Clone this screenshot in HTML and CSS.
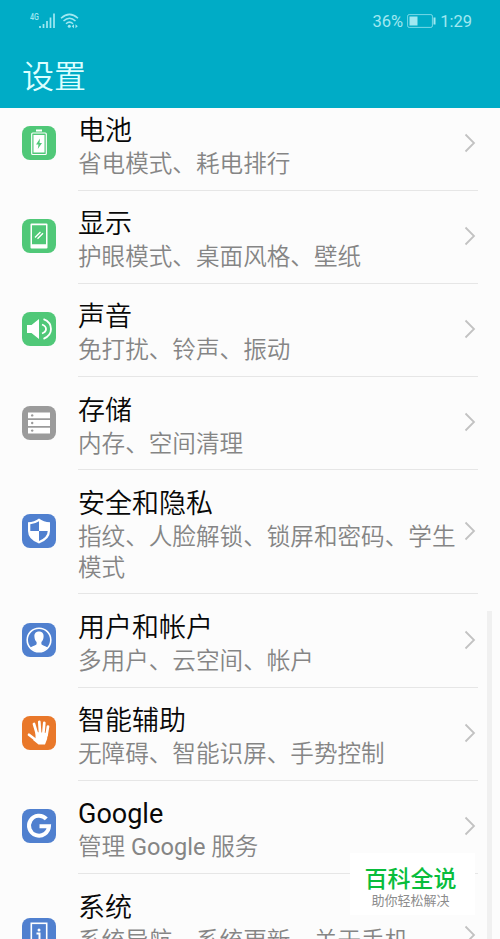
FILE: index.html
```html
<!DOCTYPE html>
<html lang="zh-CN">
<head>
<meta charset="utf-8">
<title>设置</title>
<link rel="stylesheet" href="styles.css">
</head>
<body>
<div class="phone">
  <header class="header">
    <div class="status">
      <div class="signals">
        <span class="network">4G</span>
        <svg class="bars" width="18" height="16" viewBox="0 0 18 16"><path d="M2 13v2M5.500 11v4M9 8v7M12.500 4.500v10.500M16 0.500v14.500" fill="none" stroke="currentColor" stroke-width="1.700"/></svg>
        <svg class="wifi" width="19" height="16" viewBox="0 0 19 16"><path d="M1 5.200Q9.500 -2.500 18 5.200M3.500 8Q9.500 2.500 15.500 8M6 10.800Q9.500 7.500 13 10.800" fill="none" stroke="currentColor" stroke-width="1.500"/><circle cx="9.300" cy="13.300" r="1.500" fill="currentColor"/><path d="M14 11.200v4l-2.300-2zM15.500 11.200v4l2.300-2z" fill="currentColor"/></svg>
      </div>
      <div class="power">
        <span>36%</span>
        <svg width="29" height="14" viewBox="0 0 29 14"><rect x=".6" y=".6" width="24.800" height="12.800" rx="1.500" fill="none" stroke="currentColor" stroke-width="1" opacity=".75"/><rect x="2.500" y="2.500" width="8" height="9" fill="currentColor"/><path d="M27.500 3.500v7" stroke="currentColor" stroke-width="2"/></svg>
        <span>1:29</span>
      </div>
    </div>
    <h1 class="heading">设置</h1>
  </header>

  <main class="list">
    <section class="row">
      <svg class="icon green" viewBox="0 0 34 34"><path d="M14 4.500h6" stroke="#fff" stroke-width="2"/><rect x="9.700" y="7" width="14.600" height="21.500" rx="1" fill="none" stroke="#fff" stroke-width="1.200"/><rect x="11.500" y="9" width="11" height="17.500" fill="#fff"/><path d="M18 12.500l-4 6h2.500l-.7 4.500 4.200-6h-2.500z" fill="#50c878"/></svg>
      <div class="body"><div class="text"><h2>电池</h2><p>省电模式、耗电排行</p></div><svg class="arrow" viewBox="0 0 12 20"><path d="M1.500 1.500L10 10l-8.500 8.500"/></svg></div>
    </section>
    <section class="row">
      <svg class="icon green" viewBox="0 0 34 34"><path fill="#fff" fill-rule="evenodd" d="M9.500 4.500h15a1 1 0 0 1 1 1v23a1 1 0 0 1-1 1h-15a1 1 0 0 1-1-1V5.500a1 1 0 0 1 1-1zM10 6.300v18.900h14V6.300z"/><path d="M13 18.500l5.500-5.500M15.500 19.800l5.500-5.500" stroke="#fff" stroke-width="1.400"/></svg>
      <div class="body"><div class="text"><h2>显示</h2><p>护眼模式、桌面风格、壁纸</p></div><svg class="arrow" viewBox="0 0 12 20"><path d="M1.500 1.500L10 10l-8.500 8.500"/></svg></div>
    </section>
    <section class="row">
      <svg class="icon green" viewBox="0 0 34 34"><path d="M5 13h4.500L17 7v20l-7.500-6H5z" fill="#fff"/><path d="M20 12.500q4 1.500 4 4.500t-4 4.500M21.500 7.200q7.500 3 7.500 9.800t-7.500 9.800" fill="none" stroke="#fff" stroke-width="1.800"/></svg>
      <div class="body"><div class="text"><h2>声音</h2><p>免打扰、铃声、振动</p></div><svg class="arrow" viewBox="0 0 12 20"><path d="M1.500 1.500L10 10l-8.500 8.500"/></svg></div>
    </section>
    <section class="row">
      <svg class="icon gray" viewBox="0 0 34 34"><path d="M6 6.500h22v5.800H6zM6 14.100h22v5.800H6zM6 21.700h22v5.800H6z" fill="#fff"/><g fill="#9b9b9b"><circle cx="10.200" cy="9.400" r="1.200"/><circle cx="10.200" cy="17" r="1.200"/><circle cx="10.200" cy="24.600" r="1.200"/></g></svg>
      <div class="body"><div class="text"><h2>存储</h2><p>内存、空间清理</p></div><svg class="arrow" viewBox="0 0 12 20"><path d="M1.500 1.500L10 10l-8.500 8.500"/></svg></div>
    </section>
    <section class="row">
      <svg class="icon blue" viewBox="0 0 34 34"><path d="M17 4.500Q21.500 8 28 8.200V17q0 8.500-11 12.500Q6 25.500 6 17V8.200Q12.500 8 17 4.500z" fill="#fff"/><path d="M17 7.300V17H8.300v-6.800q4.700-.2 8.700-2.900zM17 17h8.700q0 6.300-8.700 9.900z" fill="#5080cf"/></svg>
      <div class="body"><div class="text"><h2>安全和隐私</h2><p>指纹、人脸解锁、锁屏和密码、学生模式</p></div><svg class="arrow" viewBox="0 0 12 20"><path d="M1.500 1.500L10 10l-8.500 8.500"/></svg></div>
    </section>
    <section class="row">
      <svg class="icon blue" viewBox="0 0 34 34"><circle cx="17" cy="17" r="11.800" fill="none" stroke="#fff" stroke-width="1.600"/><path d="M17 8.500c-3.300 0-4.800 2.200-4.600 5 .1 2.500.9 4.300 2.200 5.500v2.200c-.8 1.300-4 1.600-6.200 3.300A11.400 11.400 0 0 0 17 28.500a11.400 11.400 0 0 0 8.600-4c-2.200-1.700-5.400-2-6.200-3.300V19c1.300-1.200 2.100-3 2.200-5.500.2-2.800-1.300-5-4.600-5z" fill="#fff"/></svg>
      <div class="body"><div class="text"><h2>用户和帐户</h2><p>多用户、云空间、帐户</p></div><svg class="arrow" viewBox="0 0 12 20"><path d="M1.500 1.500L10 10l-8.500 8.500"/></svg></div>
    </section>
    <section class="row">
      <svg class="icon orange" viewBox="0 0 34 34"><path d="M12 8l3 10M17.300 5.800l.8 12M22.300 6.800l-1 11M26 10.500l-1.500 9M7 18.800l6.500 5" fill="none" stroke="#fff" stroke-width="2.700" stroke-linecap="round"/><path d="M13.500 16l12.200 1-.6 6-2.100 5.500h-6.500L11 24l2.500-1.500z" fill="#fff"/></svg>
      <div class="body"><div class="text"><h2>智能辅助</h2><p>无障碍、智能识屏、手势控制</p></div><svg class="arrow" viewBox="0 0 12 20"><path d="M1.500 1.500L10 10l-8.500 8.500"/></svg></div>
    </section>
    <section class="row">
      <svg class="icon blue" viewBox="0 0 34 34"><path d="M24.300 9.800A10 10 0 1 0 27 17.200H17.500" fill="none" stroke="#fff" stroke-width="4"/></svg>
      <div class="body"><div class="text"><h2 class="latin">Google</h2><p>管理 <span class="latin">Google</span> 服务</p></div><svg class="arrow" viewBox="0 0 12 20"><path d="M1.500 1.500L10 10l-8.500 8.500"/></svg></div>
    </section>
    <section class="row last">
      <svg class="icon blue" viewBox="0 0 34 34"><rect x="9.300" y="5.300" width="15.400" height="23.400" fill="none" stroke="#fff" stroke-width="1.600"/><circle cx="17" cy="12" r="1.500" fill="#fff"/><path d="M14.500 15.500h3V22M14 22.500h6" fill="none" stroke="#fff" stroke-width="2"/></svg>
      <div class="body"><div class="text"><h2>系统</h2><p>系统导航、系统更新、关于手机</p></div><svg class="arrow" viewBox="0 0 12 20"><path d="M1.500 1.500L10 10l-8.500 8.500"/></svg></div>
    </section>
  </main>

  <div class="scrollbar"></div>
  <aside class="watermark"><strong>百科全说</strong><span>助你轻松解决</span></aside>
</div>
</body>
</html>
```
FILE: styles.css
```css
* { box-sizing: border-box; }
body { margin: 0; background: #fcfcfc; }
h1, h2, p { margin: 0; font-weight: 350; }

.phone {
  position: relative;
  width: 500px;
  height: 939px;
  overflow: hidden;
  background: #fcfcfc;
  font-family: Roboto, "Noto Sans CJK SC", sans-serif;
}

.header {
  position: relative;
  z-index: 1;
  height: 108px;
  background: #00acc6;
  color: #dcffff;
}
.status {
  display: flex;
  justify-content: space-between;
  height: 42px;
  padding: 0 28px 0 30px;
  color: #a0e8f1;
}
.signals { display: flex; align-items: flex-start; padding-top: 13px; }
.network {
  width: 8px;
  font-size: 9.500px;
  line-height: 8px;
  font-weight: 500;
  transform: scaleX(.75);
  transform-origin: left;
}
.bars { margin-right: 4px; }
.power { display: flex; align-items: center; gap: 4px; font-size: 16.500px; }
.power span { line-height: 20px; padding-top: 2px; }
.heading { padding-left: 22px; font-size: 32px; line-height: 71px; }

.list { margin-top: -10.500px; }
.row {
  display: flex;
  align-items: center;
  padding: 0 22px;
}
.icon { flex: none; width: 34px; height: 34px; margin-right: 22px; margin-bottom: 2px; border-radius: 8px; }
.green { background: #50c878; }
.gray { background: #9b9b9b; }
.blue { background: #5080cf; }
.orange { background: #e9782a; }
.body {
  flex: 1;
  display: flex;
  align-items: center;
  min-height: 93.200px;
  border-bottom: 1px solid #e6e6e6;
}
.last .body { height: 124.200px; align-items: flex-start; border-bottom: 0; }
.text { width: 386px; padding: 16.500px 0 9.700px; }
.text h2 { font-size: 27px; line-height: 35px; color: #080808; }
.text p { font-size: 23.600px; line-height: 31px; color: #858585; }
.text .latin { font-weight: 400; }
.arrow { flex: none; width: 12px; height: 20px; margin-bottom: 2px; }
.last .arrow { margin-top: 51px; }
.arrow path { fill: none; stroke: #c2c2c2; stroke-width: 1.800; }

.scrollbar {
  position: absolute;
  left: 487px;
  top: 611px;
  width: 5px;
  height: 328px;
  background: #f0f0f0;
}
.watermark {
  position: absolute;
  left: 350px;
  top: 853px;
  width: 125px;
  height: 62px;
  padding: 13px 4px 0 0;
  display: flex;
  flex-direction: column;
  align-items: center;
  background: #fff;
}
.watermark strong { font-size: 23px; line-height: 27px; font-weight: 500; color: #09bd3c; }
.watermark span { font-size: 13px; line-height: 15px; color: #8c8c8c; }
```
